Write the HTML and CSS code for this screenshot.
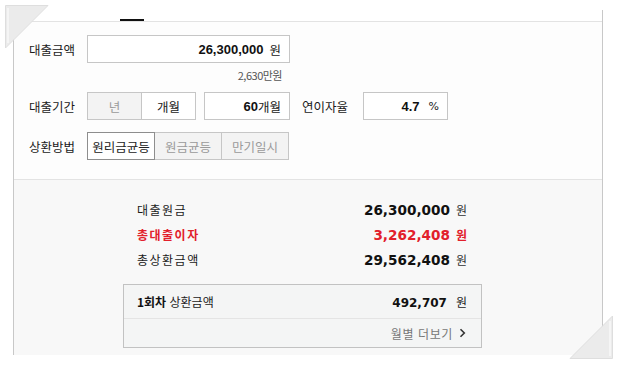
FILE: index.html
```html
<!DOCTYPE html>
<html lang="ko">
<head>
    <meta charset="UTF-8">
    <meta name="viewport" content="width=device-width, initial-scale=1.0">
    <title>대출 계산기</title>
    <link rel="stylesheet" href="styles.css">
</head>
<body>

<div class="shot">
    <div class="panel">
        <div class="tabs"><span class="tab-line"></span></div>

        <div class="form">
            <div class="row">
                <span class="label">대출금액</span>
                <div class="field wide"><b>26,300,000</b><span class="unit">원</span></div>
            </div>
            <div class="note">2,630만원</div>

            <div class="row">
                <span class="label">대출기간</span>
                <div class="seg">
                    <span class="cell off">년</span>
                    <span class="cell">개월</span>
                </div>
                <div class="field mid"><b>60</b>개월</div>
                <span class="label label-rate">연이자율</span>
                <div class="field rate"><b>4.7</b><span class="unit pct">%</span></div>
            </div>

            <div class="row row-last">
                <span class="label">상환방법</span>
                <div class="seg seg3">
                    <span class="cell on">원리금균등</span>
                    <span class="cell off">원금균등</span>
                    <span class="cell off">만기일시</span>
                </div>
            </div>
        </div>

        <div class="result">
            <div class="sum">
                <div class="sum-row"><span class="sum-label">대출원금</span><span class="sum-val"><b>26,300,000</b><span class="won">원</span></span></div>
                <div class="sum-row red"><span class="sum-label">총대출이자</span><span class="sum-val"><b>3,262,408</b><span class="won">원</span></span></div>
                <div class="sum-row"><span class="sum-label">총상환금액</span><span class="sum-val"><b>29,562,408</b><span class="won">원</span></span></div>
            </div>

            <div class="first">
                <div class="first-row">
                    <span><b>1회차</b> 상환금액</span>
                    <span class="first-val"><b>492,707</b><span class="won">원</span></span>
                </div>
                <div class="more">
                    월별 더보기
                    <svg width="7" height="10" viewBox="0 0 7 10"><path d="M1.5 1.2 L5.3 5 L1.5 8.8" fill="none" stroke="#333" stroke-width="1.6"/></svg>
                </div>
            </div>
        </div>
    </div>

    <svg class="fold fold-tl" width="46" height="46" viewBox="0 0 46 46">
        <polygon points="0.5,0.5 43,0.5 0.5,43" fill="#ebebeb" stroke="#dedede"/>
        <line x1="3" y1="3" x2="3" y2="38" stroke="#f8f8f8" stroke-width="1.5"/>
    </svg>
    <svg class="fold fold-br" width="46" height="46" viewBox="0 0 46 46">
        <polygon points="45.5,3 45.5,45.5 3,45.5" fill="#ebebeb" stroke="#dedede"/>
        <line x1="43" y1="8" x2="43" y2="43" stroke="#f8f8f8" stroke-width="1.5"/>
    </svg>
</div>

</body>
</html>
```

FILE: styles.css
```css
body {
    margin: 0;
    background: #fff;
    font-family: "Noto Sans CJK KR", "DejaVu Sans", sans-serif;
    font-size: 12px;
    color: #333;
}
b {
    font-family: "Liberation Sans", Arial, sans-serif;
    font-weight: bold;
    color: #111;
}
.shot {
    position: relative;
    width: 620px;
    height: 367px;
    padding-top: 10px;
    box-sizing: border-box;
}
.panel {
    margin-left: 13px;
    width: 590px;
    box-sizing: border-box;
    border-left: 1px solid #c8c8c8;
    border-right: 1px solid #c8c8c8;
}
.tabs {
    height: 11px;
    display: flex;
    align-items: flex-end;
    border-bottom: 1px solid #e3e3e3;
    background: #fff;
}
.tab-line {
    width: 24px;
    height: 2px;
    margin-left: 106px;
    background: #111;
}
.form {
    background: #fdfdfd;
    padding: 13px 0 19px 15px;
}
.row {
    display: flex;
    align-items: center;
    height: 28px;
}
.row + .row {
    margin-top: 12px;
}
.label {
    width: 58px;
    font-size: 12.5px;
    color: #1a1a1a;
}
.label-rate {
    width: 61px;
    margin-left: 12px;
}
.field {
    height: 28px;
    box-sizing: border-box;
    border: 1px solid #c6c6c6;
    background: #fff;
    display: flex;
    align-items: center;
    justify-content: flex-end;
    padding: 0 8px;
    font-size: 12.5px;
    color: #222;
}
.field b {
    font-size: 13px;
}
.wide {
    width: 203px;
}
.mid {
    width: 86px;
    margin-left: 8px;
}
.rate {
    width: 85px;
}
.unit {
    margin-left: 6px;
}
.pct {
    margin-left: 9px;
    font-family: "DejaVu Sans", sans-serif;
    font-size: 11px;
}
.note {
    width: 203px;
    margin: 6px 0 10px 58px;
    height: 13px;
    line-height: 13px;
    box-sizing: border-box;
    padding-right: 8px;
    text-align: right;
    font-size: 11px;
    color: #555;
    letter-spacing: -0.5px;
}
.seg {
    display: flex;
    height: 28px;
}
.cell {
    width: 55px;
    box-sizing: border-box;
    border: 1px solid #c6c6c6;
    background: #fff;
    display: flex;
    align-items: center;
    justify-content: center;
    font-size: 12.5px;
    color: #222;
}
.cell + .cell {
    margin-left: -1px;
}
.seg3 .cell {
    width: 68px;
}
.cell.off {
    background: #f3f3f3;
    color: #9a9a9a;
}
.cell.on {
    border-color: #8e8e8e;
    position: relative;
    z-index: 1;
}
.result {
    border-top: 1px solid #e3e3e3;
    background: #f8f8f8;
    padding: 17px 0 7px 109px;
}
.sum {
    width: 359px;
    box-sizing: border-box;
    padding: 0 15px 0 14px;
}
.sum-row {
    display: flex;
    justify-content: space-between;
    align-items: center;
    height: 25px;
}
.sum-label {
    font-size: 12px;
    letter-spacing: 1.5px;
    color: #1a1a1a;
}
.sum-val b {
    font-family: "DejaVu Sans", sans-serif;
    font-size: 13.6px;
}
.won {
    margin-left: 6px;
    font-size: 12px;
}
.red .sum-label,
.red .sum-val b,
.red .won {
    color: #e2202b;
    font-weight: bold;
}
.first {
    width: 359px;
    margin-top: 12px;
    box-sizing: border-box;
    border: 1px solid #c2c2c2;
    background: #f4f5f5;
}
.first-row {
    display: flex;
    justify-content: space-between;
    align-items: center;
    height: 33px;
    padding: 0 14px 0 13px;
    border-bottom: 1px solid #e4e4e4;
    font-size: 12px;
    color: #222;
}
.first-row b {
    font-family: "Noto Sans CJK KR", sans-serif;
}
.first-val b {
    font-family: "DejaVu Sans", sans-serif;
    font-size: 12px;
}
.first-val .won {
    margin-left: 9px;
}
.more {
    height: 28px;
    display: flex;
    align-items: center;
    justify-content: flex-end;
    gap: 6px;
    padding-right: 15px;
    font-size: 12px;
    letter-spacing: 0.6px;
    color: #777;
}
.fold {
    position: absolute;
}
.fold-tl {
    left: 5px;
    top: 5px;
}
.fold-br {
    left: 567px;
    top: 313px;
}
```
